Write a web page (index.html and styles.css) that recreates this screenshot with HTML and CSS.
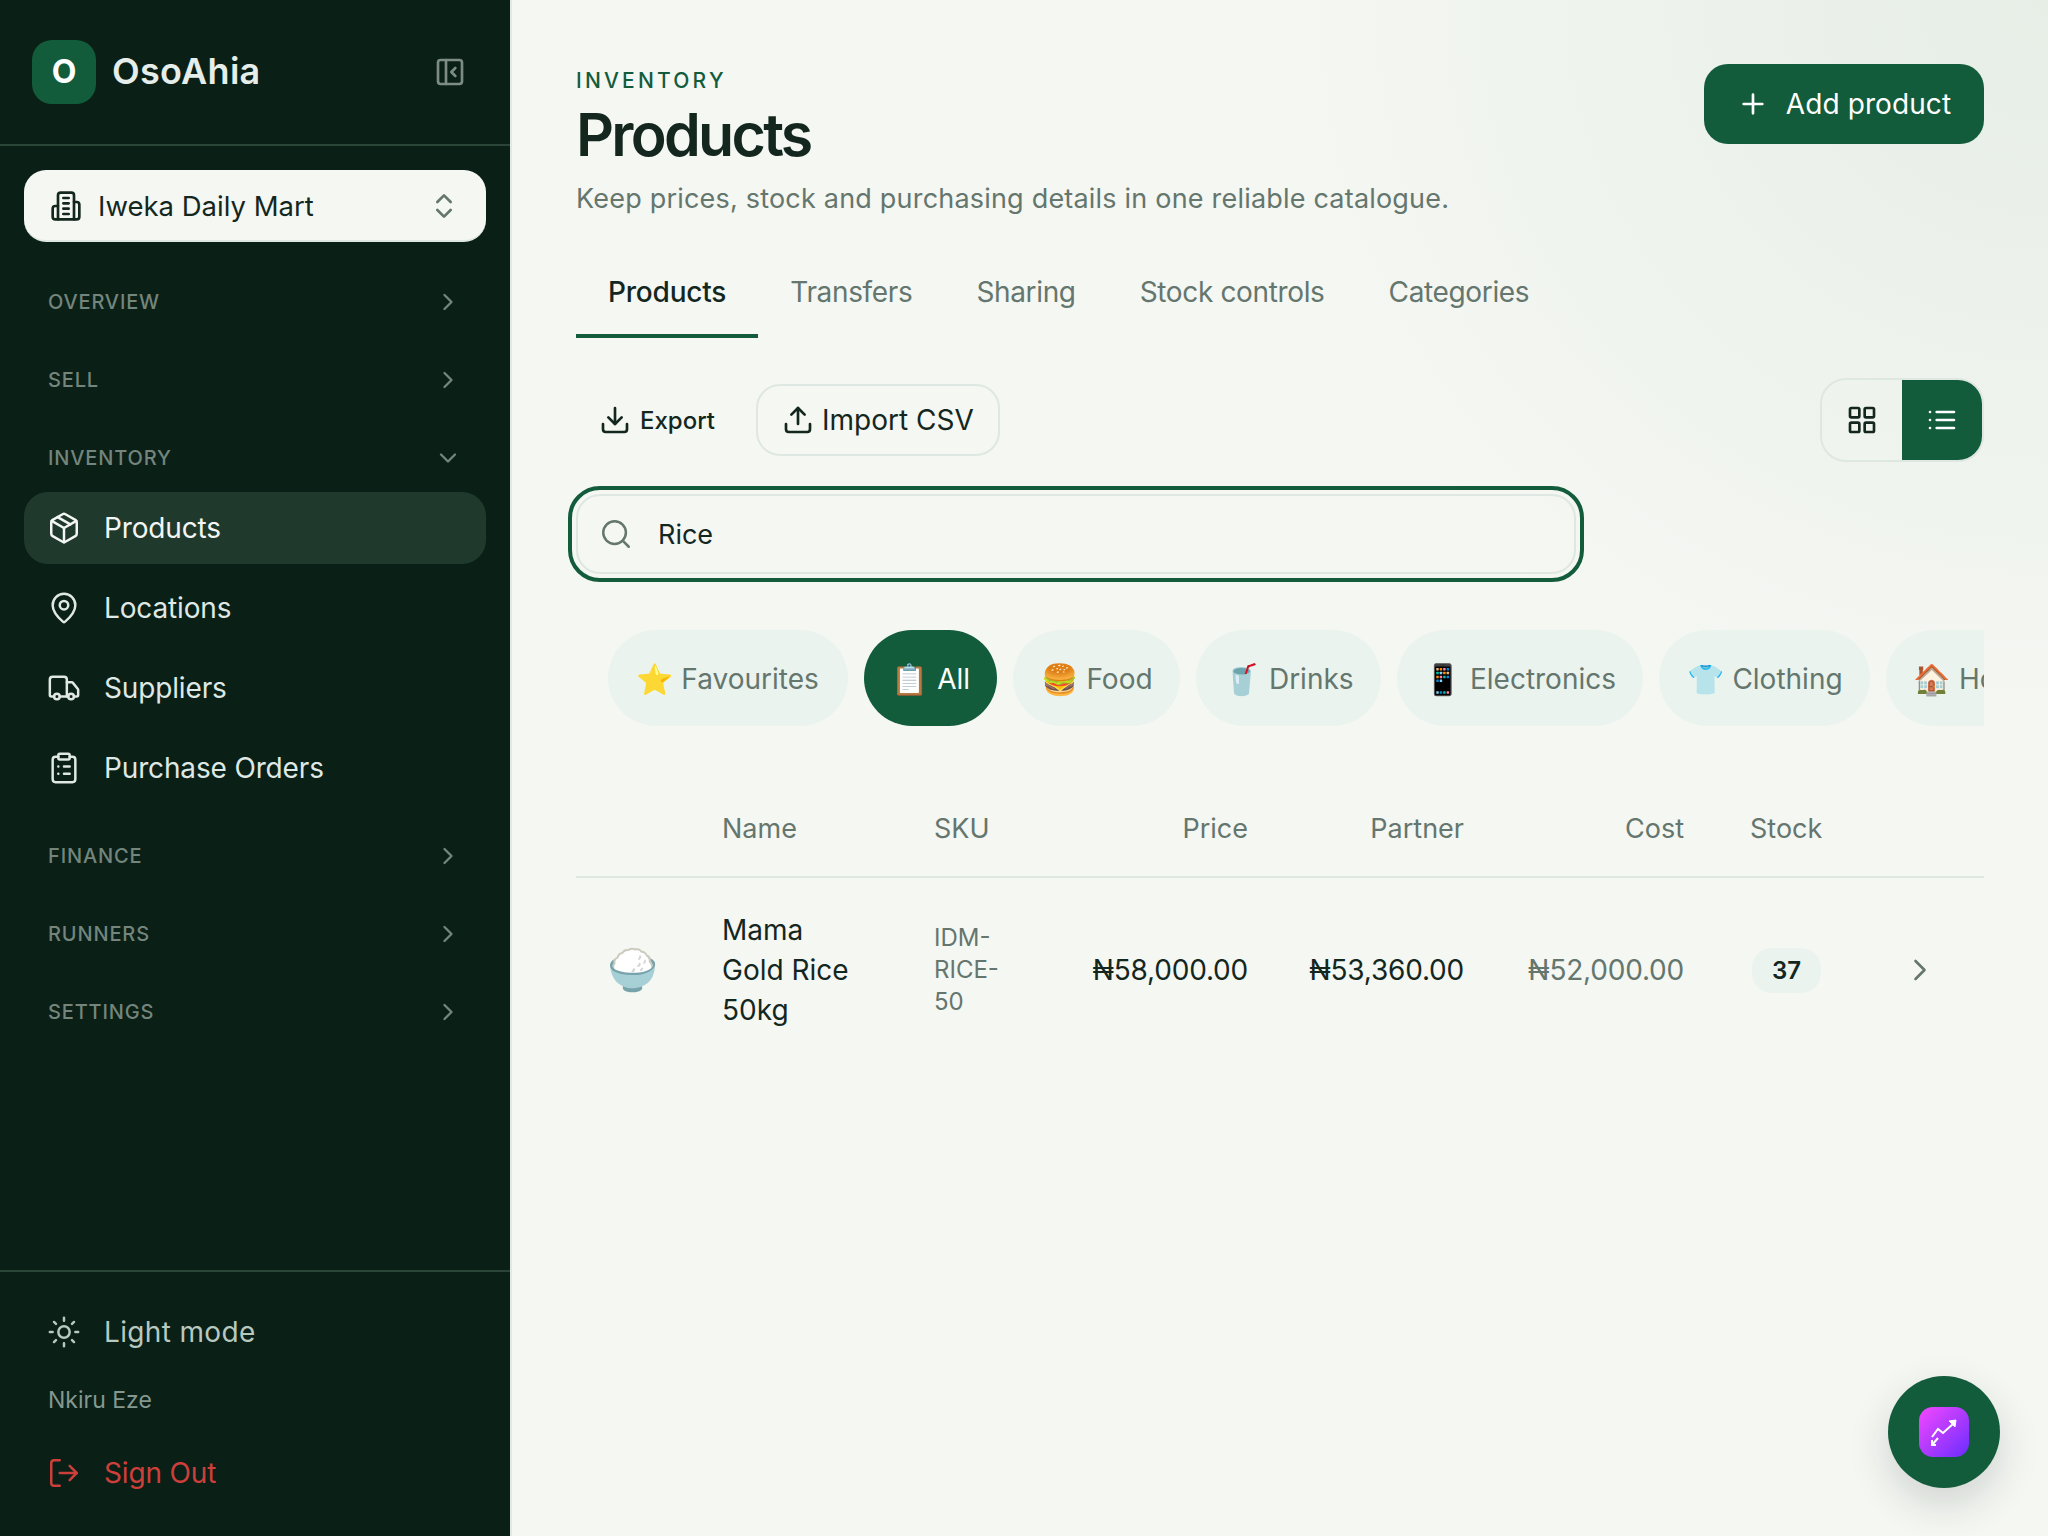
FILE: index.html
```html
<!DOCTYPE html>
<html lang="en">
<head>
<meta charset="utf-8">
<title>OsoAhia - Products</title>
<link rel="stylesheet" href="styles.css">
</head>
<body>
<div class="app">
  <aside class="sidebar">
    <div class="brand">
      <div class="brand-left">
        <div class="logo">O</div>
        <span class="brand-name">OsoAhia</span>
      </div>
      <svg class="ico collapse" viewBox="0 0 24 24"><rect x="3" y="3" width="18" height="18" rx="2"/><path d="M9 3v18"/><path d="m16 15-3-3 3-3"/></svg>
    </div>
    <button class="store">
      <svg class="ico store-ico" viewBox="0 0 24 24"><path d="M6 22V4a2 2 0 0 1 2-2h8a2 2 0 0 1 2 2v18Z"/><path d="M6 12H4a2 2 0 0 0-2 2v6a2 2 0 0 0 2 2h2"/><path d="M18 9h2a2 2 0 0 1 2 2v9a2 2 0 0 1-2 2h-2"/><path d="M10 6h4M10 10h4M10 14h4M10 18h4"/></svg>
      <span class="store-name">Iweka Daily Mart</span>
      <svg class="ico updown" viewBox="0 0 24 24"><path d="m7 15 5 5 5-5"/><path d="m7 9 5-5 5 5"/></svg>
    </button>
    <nav class="nav">
      <div class="sec"><span>OVERVIEW</span><svg class="ico chev" viewBox="0 0 24 24"><path d="m9 18 6-6-6-6"/></svg></div>
      <div class="sec"><span>SELL</span><svg class="ico chev" viewBox="0 0 24 24"><path d="m9 18 6-6-6-6"/></svg></div>
      <div class="sec sec-open"><span>INVENTORY</span><svg class="ico chev" viewBox="0 0 24 24"><path d="m6 9 6 6 6-6"/></svg></div>
      <div class="items">
        <a class="item active"><svg class="ico" viewBox="0 0 24 24"><path d="M11 21.73a2 2 0 0 0 2 0l7-4A2 2 0 0 0 21 16V8a2 2 0 0 0-1-1.73l-7-4a2 2 0 0 0-2 0l-7 4A2 2 0 0 0 3 8v8a2 2 0 0 0 1 1.73z"/><path d="M12 22V12"/><path d="m3.3 7 8.7 5 8.7-5"/><path d="m7.5 4.27 9 5.15"/></svg>Products</a>
        <a class="item"><svg class="ico" viewBox="0 0 24 24"><path d="M20 10c0 4.993-5.539 10.193-7.399 11.799a1 1 0 0 1-1.202 0C9.539 20.193 4 14.993 4 10a8 8 0 0 1 16 0"/><circle cx="12" cy="10" r="3"/></svg>Locations</a>
        <a class="item"><svg class="ico" viewBox="0 0 24 24"><path d="M14 18V6a2 2 0 0 0-2-2H4a2 2 0 0 0-2 2v11a1 1 0 0 0 1 1h2"/><path d="M15 18H9"/><path d="M19 18h2a1 1 0 0 0 1-1v-3.65a1 1 0 0 0-.22-.624l-3.48-4.35A1 1 0 0 0 17.52 8H14"/><circle cx="17" cy="18" r="2"/><circle cx="7" cy="18" r="2"/></svg>Suppliers</a>
        <a class="item"><svg class="ico" viewBox="0 0 24 24"><rect x="8" y="2" width="8" height="4" rx="1"/><path d="M16 4h2a2 2 0 0 1 2 2v14a2 2 0 0 1-2 2H6a2 2 0 0 1-2-2V6a2 2 0 0 1 2-2h2"/><path d="M12 11h4M12 16h4M8 11h.01M8 16h.01"/></svg>Purchase Orders</a>
      </div>
      <div class="sec sec-after"><span>FINANCE</span><svg class="ico chev" viewBox="0 0 24 24"><path d="m9 18 6-6-6-6"/></svg></div>
      <div class="sec"><span>RUNNERS</span><svg class="ico chev" viewBox="0 0 24 24"><path d="m9 18 6-6-6-6"/></svg></div>
      <div class="sec"><span>SETTINGS</span><svg class="ico chev" viewBox="0 0 24 24"><path d="m9 18 6-6-6-6"/></svg></div>
    </nav>
    <div class="side-foot">
      <a class="item mode"><svg class="ico" viewBox="0 0 24 24"><circle cx="12" cy="12" r="4"/><path d="M12 2v2M12 20v2M4.93 4.93l1.41 1.41M17.66 17.66l1.41 1.41M2 12h2M20 12h2M6.34 17.66l-1.41 1.41M19.07 4.93l-1.41 1.41"/></svg>Light mode</a>
      <div class="user">Nkiru Eze</div>
      <a class="item signout"><svg class="ico" viewBox="0 0 24 24"><path d="M9 21H5a2 2 0 0 1-2-2V5a2 2 0 0 1 2-2h4"/><path d="m16 17 5-5-5-5"/><path d="M21 12H9"/></svg>Sign Out</a>
    </div>
  </aside>

  <main class="main">
    <header class="head">
      <div>
        <div class="eyebrow">INVENTORY</div>
        <h1 class="title">Products</h1>
        <p class="sub">Keep prices, stock and purchasing details in one reliable catalogue.</p>
      </div>
      <button class="add"><svg class="ico" viewBox="0 0 24 24"><path d="M5 12h14M12 5v14"/></svg>Add product</button>
    </header>

    <div class="tabs">
      <a class="tab on">Products</a>
      <a class="tab">Transfers</a>
      <a class="tab">Sharing</a>
      <a class="tab">Stock controls</a>
      <a class="tab">Categories</a>
    </div>

    <div class="toolbar">
      <div class="tools">
        <button class="export"><svg class="ico" viewBox="0 0 24 24"><path d="M21 15v4a2 2 0 0 1-2 2H5a2 2 0 0 1-2-2v-4"/><path d="m7 10 5 5 5-5"/><path d="M12 15V3"/></svg>Export</button>
        <button class="import"><svg class="ico" viewBox="0 0 24 24"><path d="M21 15v4a2 2 0 0 1-2 2H5a2 2 0 0 1-2-2v-4"/><path d="m17 8-5-5-5 5"/><path d="M12 3v12"/></svg>Import CSV</button>
      </div>
      <div class="views">
        <span class="view"><svg class="ico" viewBox="0 0 24 24"><rect x="3" y="3" width="7" height="7" rx="1"/><rect x="14" y="3" width="7" height="7" rx="1"/><rect x="14" y="14" width="7" height="7" rx="1"/><rect x="3" y="14" width="7" height="7" rx="1"/></svg></span>
        <span class="view view-on"><svg class="ico" viewBox="0 0 24 24"><path d="M3 12h.01M3 18h.01M3 6h.01M8 12h13M8 18h13M8 6h13"/></svg></span>
      </div>
    </div>

    <div class="search">
      <svg class="ico" viewBox="0 0 24 24"><circle cx="11" cy="11" r="8"/><path d="m21 21-4.3-4.3"/></svg>
      <span class="search-val">Rice</span>
    </div>

    <div class="chips">
      <span class="chip"><i class="emo">⭐</i>Favourites</span>
      <span class="chip chip-on"><i class="emo">📋</i>All</span>
      <span class="chip"><i class="emo">🍔</i>Food</span>
      <span class="chip"><i class="emo">🥤</i>Drinks</span>
      <span class="chip"><i class="emo">📱</i>Electronics</span>
      <span class="chip"><i class="emo">👕</i>Clothing</span>
      <span class="chip"><i class="emo">🏠</i>Home</span>
    </div>

    <div class="table">
      <div class="row row-head">
        <span></span>
        <span>Name</span>
        <span>SKU</span>
        <span class="num">Price</span>
        <span class="num">Partner</span>
        <span class="num">Cost</span>
        <span class="stock-h">Stock</span>
        <span></span>
      </div>
      <div class="row row-body">
        <span class="thumb">🍚</span>
        <span class="name">Mama<br>Gold Rice<br>50kg</span>
        <span class="sku">IDM-<br>RICE-<br>50</span>
        <span class="num">₦58,000.00</span>
        <span class="num">₦53,360.00</span>
        <span class="num cost">₦52,000.00</span>
        <span class="stock-c"><b class="badge">37</b></span>
        <svg class="ico go" viewBox="0 0 24 24"><path d="m9 18 6-6-6-6"/></svg>
      </div>
    </div>

    <button class="fab" aria-label="Insights">
      <span class="fab-tile">
        <svg viewBox="0 0 50 50"><path d="M13 30l6-8 5 4 11-10"/><path d="M30 14l7-1-1 7z" class="fill"/><path d="M19 31l-6 7"/><path d="M13 33v5h4"/></svg>
      </span>
    </button>
  </main>
</div>
</body>
</html>
```
FILE: styles.css
```css
* { box-sizing: border-box; }
html, body { margin: 0; height: 100%; }
body {
  font-family: "Inter", "Noto Sans", "Liberation Sans", "Noto Color Emoji", sans-serif;
  color: #14271f;
  background: #f5f7f3;
}
button { font: inherit; color: inherit; border: 0; background: none; padding: 0; }
.app { display: flex; width: 2048px; height: 1536px; overflow: hidden; }
.ico {
  width: 32px; height: 32px; flex: none;
  fill: none; stroke: currentColor; stroke-width: 2;
  stroke-linecap: round; stroke-linejoin: round;
}

/* Sidebar */
.sidebar {
  width: 512px; flex: none; display: flex; flex-direction: column;
  background: #0a1f16; border-right: 2px solid #e2e9e5;
}
.brand {
  height: 146px; flex: none; padding: 0 32px;
  border-bottom: 2px solid #2b4638;
  display: flex; align-items: center; justify-content: space-between;
}
.brand-left { display: flex; align-items: center; gap: 16px; }
.logo {
  width: 64px; height: 64px; border-radius: 20px; background: #125c3c;
  color: #fff; font-size: 32px; font-weight: 700; padding-bottom: 1px;
  display: flex; align-items: center; justify-content: center;
}
.brand-name { font-size: 36px; font-weight: 600; color: #e5eeea; letter-spacing: 0.3px; margin-top: -2px; }
.collapse { color: #7d8c85; margin-right: 12px; }
.store {
  margin: 24px 24px 0; height: 72px; flex: none; width: 462px;
  background: #f5f7f3; border-radius: 22px; border-bottom: 2px solid #dfe7e3;
  display: flex; align-items: center; padding: 2px 26px 0 26px; color: #14271f;
}
.store-name { margin-left: 16px; font-size: 27.5px; font-weight: 400; flex: 1; text-align: left; letter-spacing: 0; }
.updown { color: #64766d; }
.nav { margin-top: 33px; padding: 0 24px; display: flex; flex-direction: column; }
.sec {
  height: 52px; padding: 1px 24px 0 24px; flex: none;
  display: flex; align-items: center; justify-content: space-between;
  font-size: 20px; font-weight: 500; letter-spacing: 0.85px; color: #73857c;
}
.sec + .sec { margin-top: 26px; }
.sec .chev { width: 28px; height: 28px; color: #73857c; }
.items { margin-top: 9px; display: flex; flex-direction: column; gap: 8px; }
.item {
  height: 72px; border-radius: 24px; padding-left: 23px; gap: 23px;
  display: flex; align-items: center; font-size: 28px; font-weight: 400; color: #dfe8e4;
  letter-spacing: -0.15px;
}
.item .ico { width: 34px; height: 34px; stroke-width: 1.75; }
.item.active { background: #1f3a2c; color: #f3f6f4; }
.sec-after { margin-top: 25px; }
.side-foot {
  margin-top: auto; border-top: 2px solid #2b4638;
  padding: 24px 24px 27px;
}
.mode { color: #b7c8bf; letter-spacing: 0.35px; }
.user { margin: 12px 0 17px 24px; line-height: 40px; font-size: 23px; color: #849890; }
.signout { color: #cc3f3b; }

/* Main */
.main {
  flex: 1; position: relative; padding: 0 64px; min-width: 0;
  background:
    radial-gradient(ellipse 800px 760px at 100% 0, #e6eee6 0%, rgba(230,238,230,0) 100%),
    #f5f7f3;
}
.head { padding-top: 64px; display: flex; justify-content: space-between; align-items: flex-start; }
.eyebrow { line-height: 32px; margin-top: 1px; font-size: 21px; font-weight: 500; letter-spacing: 3.2px; color: #125c3c; }
.title { margin: 1px 0 0; line-height: 74px; font-size: 59px; font-weight: 600; letter-spacing: -2.7px; color: #14271f; }
.sub { margin: 7px 0 0; line-height: 40px; font-size: 27px; letter-spacing: 0.2px; color: #64766d; }
.add {
  width: 280px; height: 80px; background: #125c3c; color: #fff; border-radius: 24px;
  display: flex; align-items: center; justify-content: center; gap: 17px;
  font-size: 28px; font-weight: 400; letter-spacing: 0.1px;
}
.tabs { display: flex; margin-top: 25px; }
.tab {
  padding: 27px 32px 21px; line-height: 42px; border-bottom: 4px solid transparent;
  font-size: 28px; font-weight: 400; color: #64766d; letter-spacing: -0.35px;
}
.tab.on { color: #14271f; font-weight: 500; letter-spacing: -0.2px; border-bottom-color: #125c3c; }
.toolbar { margin-top: 40px; height: 84px; display: flex; justify-content: space-between; align-items: center; }
.tools { display: flex; align-items: center; gap: 16px; }
.export {
  height: 72px; padding: 0 25px 0 23px; display: flex; align-items: center; gap: 9px;
  font-size: 24px; font-weight: 500; letter-spacing: 0;
}
.import {
  height: 72px; padding: 0 24px; display: flex; align-items: center; gap: 8px;
  border: 2px solid #dfe7e3; border-radius: 24px; font-size: 28px; font-weight: 400;
}
.views {
  display: flex; border: 2px solid #dfe7e3; border-radius: 26px; overflow: hidden;
}
.view { width: 80px; height: 80px; display: flex; align-items: center; justify-content: center; }
.view-on { background: #125c3c; color: #fff; }
.search {
  margin-top: 32px; height: 80px; display: flex; align-items: center; gap: 25px;
  width: 1000px; padding-left: 21px;
  border: 2px solid #dfe7e3; border-radius: 24px;
  outline: 4px solid #125c3c; outline-offset: 4px;
}
.search .ico { width: 34px; height: 34px; color: #64766d; stroke-width: 1.75; }
.search-val { font-size: 27px; color: #14271f; }
.chips { margin-top: 56px; padding-left: 32px; display: flex; gap: 16px; overflow: hidden; }
.chip {
  flex: none; height: 96px; border-radius: 48px; padding: 2px 27px 0 28px;
  background: #ebf3ee; color: #64766d;
  display: flex; align-items: center; gap: 8px; font-size: 28px; font-weight: 400;
}
.chip:first-child { padding-right: 29px; }
.chip-on { background: #125c3c; color: #fff; }
.emo { font-style: normal; font-size: 30px; font-family: "Noto Color Emoji", sans-serif; }
.table { margin-top: 54px; }
.row {
  display: grid; align-items: center;
  grid-template-columns: 114px 212px 153px 225px 216px 220px 136px 1fr;
}
.row > * { padding: 0 32px; min-width: 0; }
.row-head { height: 98px; border-bottom: 2px solid #dfe7e3; font-size: 27px; color: #64766d; }
.row-body { height: 184px; font-size: 28px; }
.row > .num { padding-left: 0; text-align: right; white-space: nowrap; }
.row-body > .num { letter-spacing: -0.2px; }
.row > .stock-h { padding: 0 0 0 34px; }
.row > .thumb { font-size: 41px; padding: 0; text-align: center; font-family: "Noto Color Emoji", sans-serif; }
.name { line-height: 40px; font-weight: 400; }
.sku { line-height: 32px; font-size: 24px; color: #64766d; }
.row > .cost { color: #64766d; }
.row > .stock-c { padding: 0 0 0 36px; }
.badge {
  display: inline-flex; align-items: center; justify-content: center;
  width: 69px; height: 45px; border-radius: 20px; background: #ebf3ee;
  font-size: 24px; font-weight: 600; color: #14271f;
}
.row-body .go { padding: 0; width: 36px; height: 36px; margin-left: 50px; color: #64766d; stroke-width: 1.75; }
.fab {
  position: absolute; right: 48px; bottom: 48px; width: 112px; height: 112px; border-radius: 50%;
  background: #125c3c; display: flex; align-items: center; justify-content: center;
  box-shadow: 0 16px 40px rgba(10,31,22,.16);
}
.fab-tile {
  width: 50px; height: 50px; border-radius: 14px; display: block;
  background: linear-gradient(135deg, #f548ff 0%, #6a2dff 100%);
}
.fab-tile svg { display: block; width: 50px; height: 50px; fill: none; stroke: #fff; stroke-width: 2; stroke-linejoin: miter; }
.fab-tile svg .fill { fill: #fff; stroke-width: 1; }
```
